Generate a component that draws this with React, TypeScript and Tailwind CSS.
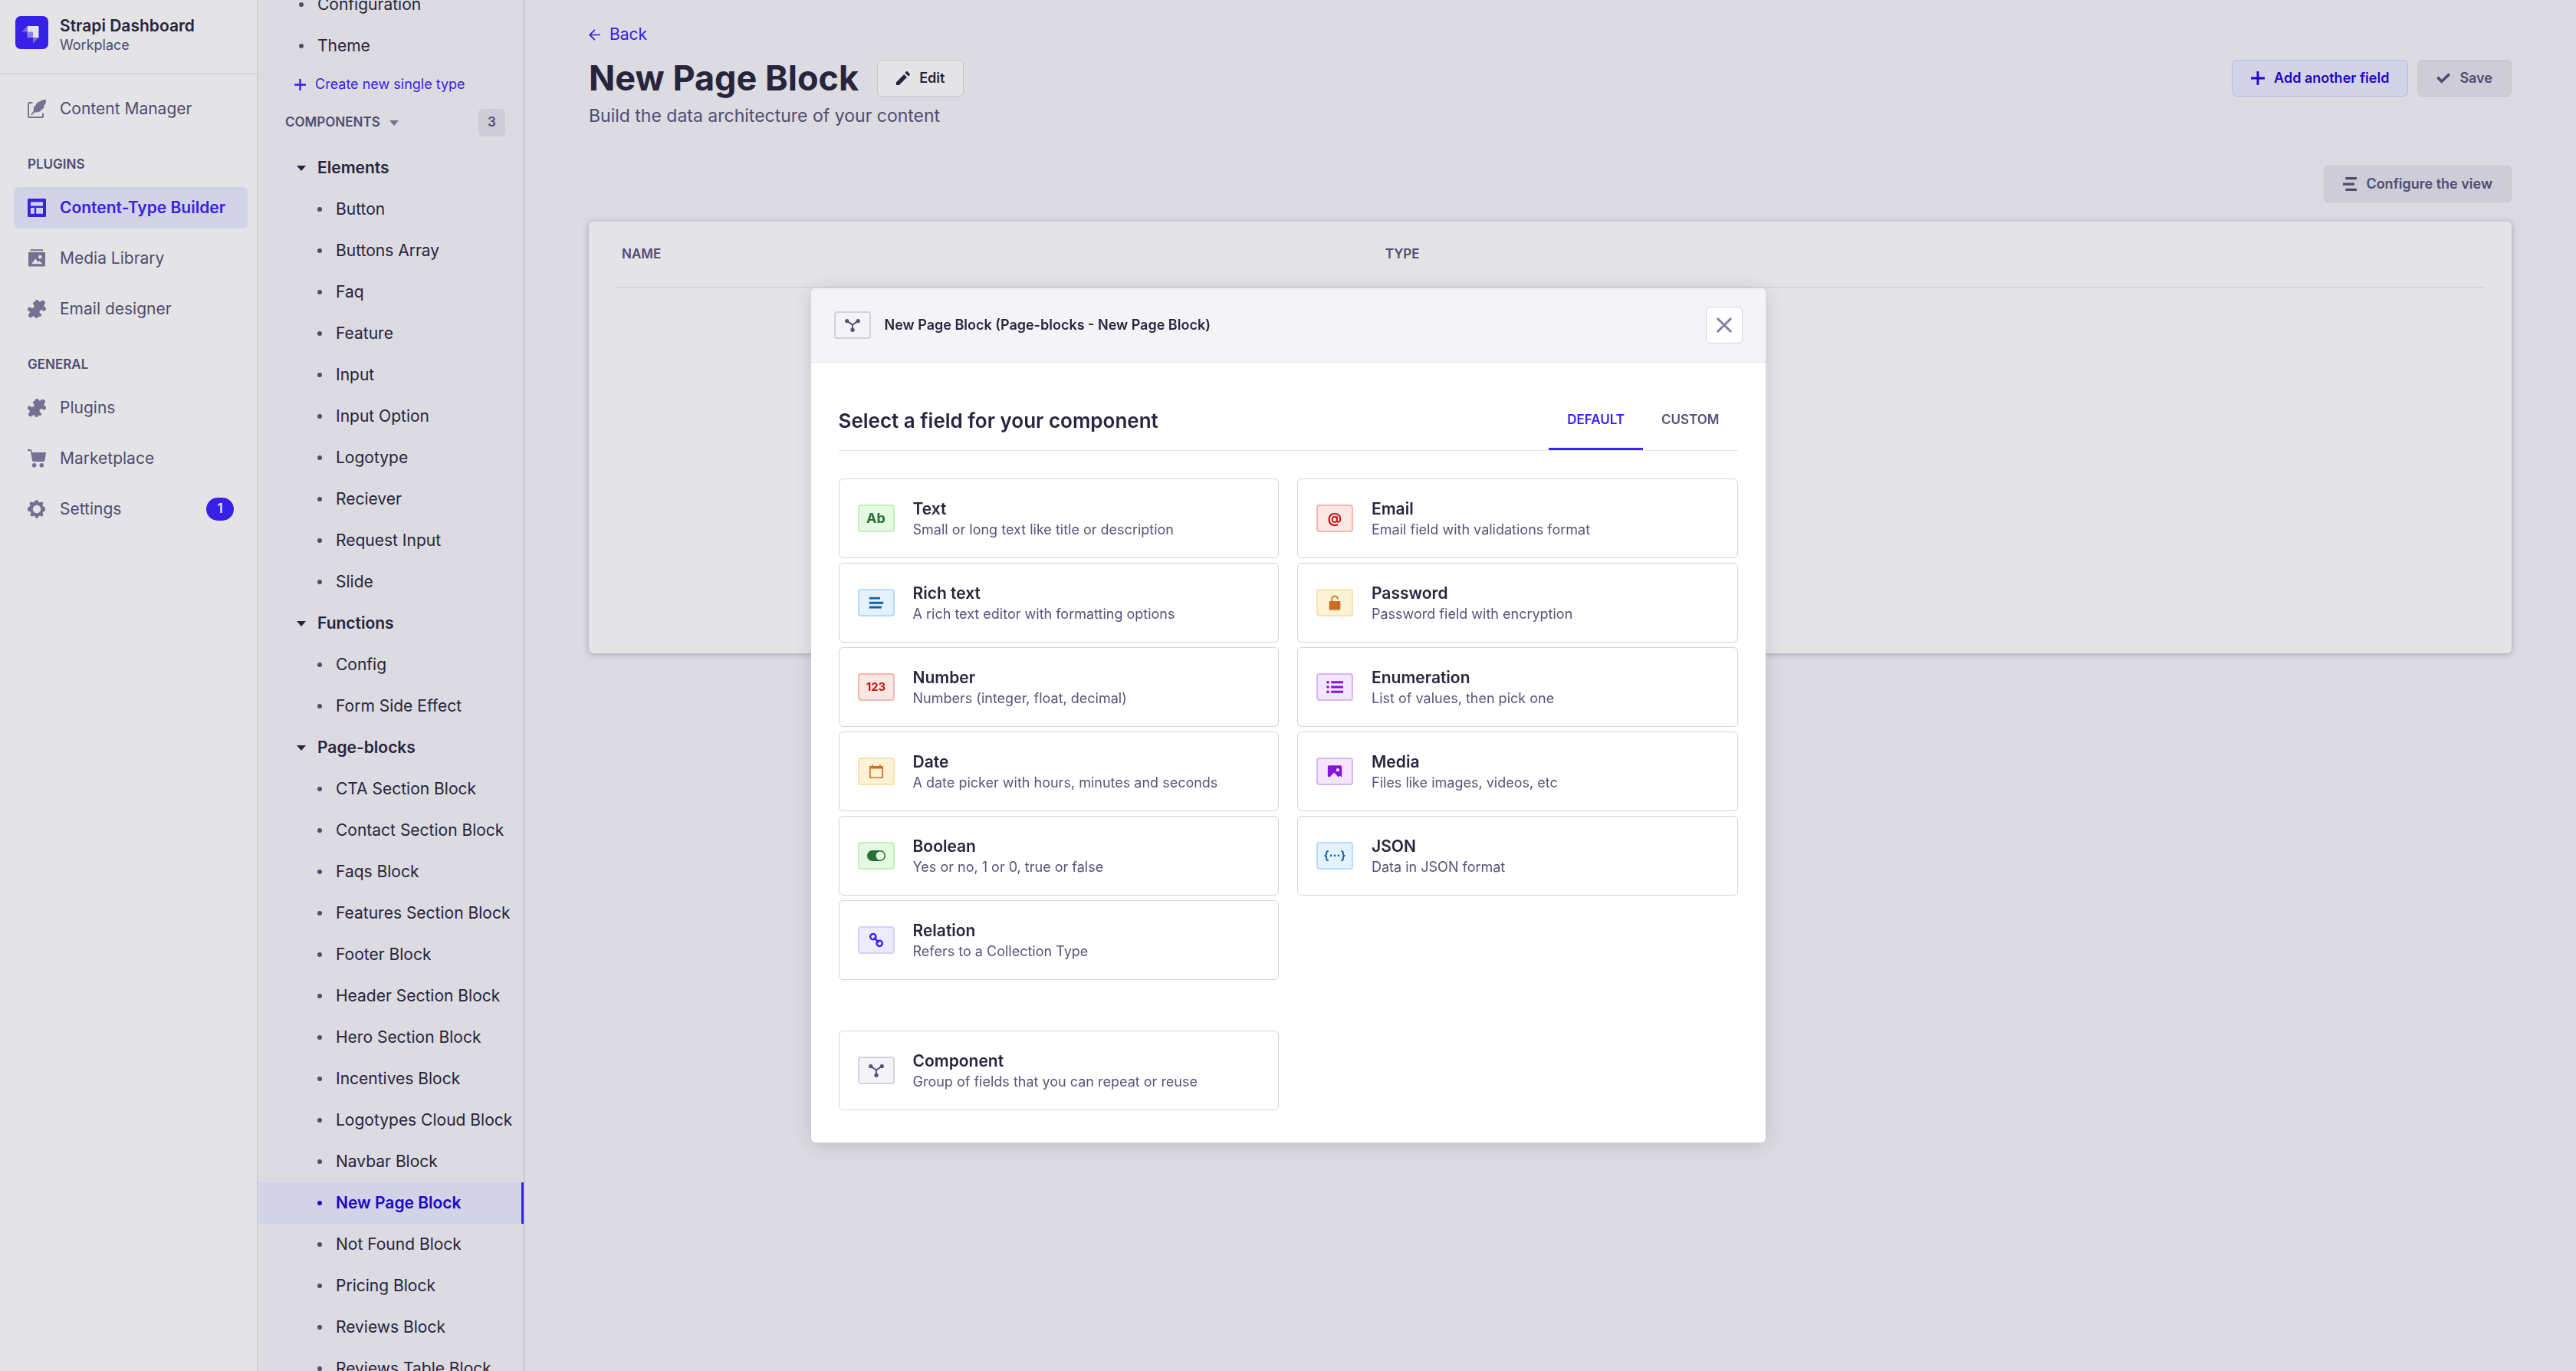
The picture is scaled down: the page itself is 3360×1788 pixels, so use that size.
import type { ReactNode } from "react";

type IconProps = { className?: string };

function Svg({ className, children, box = 24 }: IconProps & { children: ReactNode; box?: number }) {
  return (
    <svg viewBox={`0 0 ${box} ${box}`} className={className} fill="currentColor" aria-hidden="true">
      {children}
    </svg>
  );
}

const FeatherIcon = ({ className }: IconProps) => (
  <Svg className={className}>
    <path d="M6.500 4H2.600A1.600 1.600 0 0 0 1 5.600V21.400A1.600 1.600 0 0 0 2.600 23H18.400A1.600 1.600 0 0 0 20 21.400V17.500" fill="none" stroke="currentColor" strokeWidth="1.900" />
    <path d="M24 0c-2.400 0-4.700.4-6.700 1.300l-1.500 1.900-.3-1.200c-1.800 1-3.200 2.100-4.300 3.400l-.5 2.600-1-1C8.200 9.300 7.500 11.700 7.900 14.800L4.300 19l1.300 1.200 3.500-3.900c3.600.6 6.600-.2 8.900-2.200l-1.300-.9 3-.8c1-1.200 1.800-2.500 2.400-4l-1.500-.9 2.200-.9C23.700 4.700 24 2.500 24 0Z" />
  </Svg>
);

const LayoutIcon = ({ className }: IconProps) => (
  <Svg className={className}>
    <path fillRule="evenodd" d="M1.200 0h21.600c.7 0 1.200.5 1.200 1.200v21.600c0 .7-.5 1.200-1.200 1.200H1.200C.5 24 0 23.500 0 22.800V1.200C0 .5.5 0 1.200 0ZM4 4.600v4.900h16V4.600H4Zm0 7.500v7.600h4.800v-7.600H4Zm7.200 0v7.600H20v-7.600h-8.800Z" />
  </Svg>
);

const MediaLibraryIcon = ({ className }: IconProps) => (
  <Svg className={className}>
    <path d="M3.500.2h16.700v1.800H3.500z" />
    <path fillRule="evenodd" d="M2.300 3.800h19.400c.7 0 1.300.6 1.300 1.300v16.200c0 .7-.6 1.300-1.300 1.300H2.300c-.7 0-1.300-.6-1.300-1.300V5.100c0-.7.600-1.300 1.300-1.300Zm14 4a2.300 2.300 0 1 0 0 4.600 2.300 2.300 0 0 0 0-4.600ZM5 19.200h14.200l-3.500-4-2 1.800-3.400-4.500L5 19.200Z" />
  </Svg>
);

const PuzzleIcon = ({ className }: IconProps) => (
  <Svg className={className}>
    <path d="M9.400 1.900C9.900.7 11 0 12.200 0c1.300 0 2.200.8 2.700 1.900.4.800 1.500 1.100 2.200.3l.7-.7c1.200-1.100 3-.9 4.200.2 1.200 1.100 1.300 3 .2 4.200l-.8.900c-.6.8-.2 1.900.7 2.200 1.100.4 1.900 1.500 1.900 2.800 0 1.200-.7 2.400-1.900 2.800-.7.300-1.500 0-2.100-.6-.9-.9-2.200-1.100-3.200-.4-1.400.9-1.700 2.700-.7 4 .6.700 1.600.8 1.900 1.700.2.500.1 1.200-.2 1.700-.6 1-1.800 1.400-2.700.8-.3-.2-.6-.1-.8.3-.5 1.100-1.400 1.900-2.600 1.900-1.300 0-2.300-.8-2.700-2-.3-.8-1.400-1-2.100-.4l-.9.900c-1.100 1.100-3 1-4.100-.2-1.200-1.200-1.300-3-.2-4.100l.9-1c.6-.7.400-1.700-.5-2.100C.800 14.600 0 13.600 0 12.300c0-1.300.8-2.400 2-2.800.8-.3 1.500 0 2 .6 1 1 2.300 1.200 3.400.4 1.300-.9 1.500-2.700.5-3.900-.5-.6-1.100-1-1-1.900.1-1 1-1.700 1.900-1.700.4 0 .5-.5.600-1.100Z" />
  </Svg>
);

const CartIcon = ({ className }: IconProps) => (
  <Svg className={className}>
    <path d="M0 0h3.300c1 0 1.800.7 2 1.600L5.700 4H24l-1.500 10.200c-.1 1-.9 1.700-1.900 1.700H8c-1 0-1.800-.7-2-1.600L4 3 3.600 1.900H0V0Z" />
    <circle cx="8.600" cy="20.800" r="2.800" />
    <circle cx="18.300" cy="20.800" r="2.800" />
  </Svg>
);

const CogIcon = ({ className }: IconProps) => (
  <Svg className={className}>
    <path fillRule="evenodd" d="M10.200 1.200C10.600.4 11.200 0 12 0s1.400.4 1.800 1.200l.6 1.300c.4.8 1 1 1.800.700l1.400-.5c.9-.3 1.700-.2 2.200.3.600.600.700 1.300.4 2.200l-.5 1.400c-.3.800 0 1.500.7 1.800l1.400.6c.8.400 1.200 1 1.200 1.800v2.400c0 .8-.4 1.400-1.200 1.800l-1.400.6c-.7.300-1 1-.7 1.800l.5 1.400c.3.900.2 1.600-.4 2.200-.5.500-1.300.6-2.200.3l-1.400-.5c-.8-.3-1.400-.1-1.800.7l-.6 1.300c-.4.800-1 1.200-1.800 1.200s-1.400-.4-1.800-1.200l-.6-1.300c-.4-.8-1-1-1.800-.7l-1.400.5c-.9.300-1.700.2-2.200-.3-.6-.6-.7-1.300-.4-2.200l.5-1.400c.3-.8 0-1.500-.7-1.800l-1.400-.6C.400 14.600 0 14 0 13.200v-2.400C0 10 .4 9.400 1.200 9l1.400-.6c.7-.3 1-1 .7-1.800l-.5-1.400c-.3-.9-.2-1.600.4-2.200.5-.5 1.300-.6 2.200-.3l1.400.5c.8.3 1.400.1 1.800-.7l.6-1.300ZM12 6.800a5.200 5.200 0 1 0 0 10.400 5.200 5.200 0 0 0 0-10.400Z" />
  </Svg>
);

const PlusIcon = ({ className }: IconProps) => (
  <Svg className={className}>
    <path d="M10.100 0h3.800v10.100H24v3.800H13.900V24h-3.800V13.900H0v-3.800h10.100z" />
  </Svg>
);

const CheckIcon = ({ className }: IconProps) => (
  <Svg className={className}>
    <path d="M20.700 3.100 24 6.500 9 20.900.2 12.200l3.400-3.400L9 14.300z" />
  </Svg>
);

const PencilIcon = ({ className }: IconProps) => (
  <Svg className={className}>
    <path d="M0 19v5h5L18.600 10.400l-5-5L0 19ZM23.600 4.500 19.500.4a1.300 1.300 0 0 0-1.900 0l-2.300 2.300 6 6 2.300-2.300c.5-.5.500-1.400 0-1.900Z" />
  </Svg>
);

const ConfigureIcon = ({ className }: IconProps) => (
  <Svg className={className}>
    <path d="M4.500 0H24v4.300H4.500zM0 10h20v4.300H0zM4.500 19.700H24V24H4.500z" />
  </Svg>
);

const ArrowLeftIcon = ({ className }: IconProps) => (
  <Svg className={className}>
    <path d="M24 13.300H5.200l8.300 8.300-1.900 1.900L0 12 11.600.5l1.900 1.900-8.300 8.300H24z" />
  </Svg>
);

const CaretIcon = ({ className }: IconProps) => (
  <svg viewBox="0 0 12 7" className={className} fill="currentColor" aria-hidden="true">
    <path d="M0 0h12L6 7z" />
  </svg>
);

const CrossIcon = ({ className }: IconProps) => (
  <Svg className={className}>
    <path d="M2 2l20 20M22 2 2 22" fill="none" stroke="currentColor" strokeWidth="3.400" strokeLinecap="round" />
  </Svg>
);

const ComponentIcon = ({ className }: IconProps) => (
  <Svg className={className}>
    <circle cx="3.300" cy="5.500" r="3.200" />
    <circle cx="20.700" cy="5.500" r="3.200" />
    <circle cx="12" cy="19.500" r="3.200" />
    <path d="M3.300 5.500 12 11.500 20.700 5.500M12 11.500v8" fill="none" stroke="currentColor" strokeWidth="2.400" />
  </Svg>
);

const RichTextIcon = ({ className }: IconProps) => (
  <Svg className={className}>
    <path d="M2 4h15.500v3.200H2zM2 10.600h20v3.200H2zM2 17h17.500v3.200H2z" />
  </Svg>
);

const DateIcon = ({ className }: IconProps) => (
  <Svg className={className}>
    <path fillRule="evenodd" d="M4.500 0h2v2.600h11V0h2v2.600H23c.6 0 1 .4 1 1V23c0 .6-.4 1-1 1H1c-.6 0-1-.4-1-1V3.600c0-.6.400-1 1-1h3.500V0ZM2.200 7.200V22h19.600V7.200H2.200Z" />
  </Svg>
);

const ToggleIcon = ({ className }: IconProps) => (
  <svg viewBox="0 0 24 14" className={className} fill="currentColor" aria-hidden="true">
    <path fillRule="evenodd" d="M7 0h10a7 7 0 0 1 0 14H7A7 7 0 0 1 7 0Zm10 1.500a5.500 5.500 0 1 0 0 11 5.500 5.500 0 0 0 0-11Z" />
  </svg>
);

const RelationIcon = ({ className }: IconProps) => (
  <Svg className={className}>
    <g fill="none" stroke="currentColor" strokeWidth="2.900">
      <circle cx="7" cy="6.800" r="4.400" />
      <circle cx="17" cy="17.200" r="4.400" />
      <path d="M8.500 8 15.500 16" />
    </g>
  </Svg>
);

const LockIcon = ({ className }: IconProps) => (
  <Svg className={className}>
    <path d="M4.400 9.500h15.200c.7 0 1.200.5 1.200 1.200v11.600c0 .7-.5 1.200-1.200 1.200H4.400c-.7 0-1.200-.5-1.200-1.200V10.700c0-.7.500-1.200 1.200-1.200Z" />
    <path d="M7.300 10V6.500c0-3 2-4.900 4.700-4.900 2.300 0 4 1.300 4.500 3.300l.3 1.600" fill="none" stroke="currentColor" strokeWidth="2" />
  </Svg>
);

const EnumerationIcon = ({ className }: IconProps) => (
  <Svg className={className}>
    <path d="M6.800 3.600H24v3.200H6.800zM6.800 10.400H24v3.200H6.800zM6.800 17.200H24v3.200H6.800z" />
    <circle cx="2.200" cy="5.200" r="2" />
    <circle cx="2.200" cy="12" r="2" />
    <circle cx="2.200" cy="18.800" r="2" />
  </Svg>
);

const MediaIcon = ({ className }: IconProps) => (
  <Svg className={className}>
    <path fillRule="evenodd" d="M4 3.500h16c1.100 0 2 .9 2 2V20.500l-2.800-2.600-2.200 2.300-6-6.700L4.500 20.500 2 19V5.500c0-1.100.9-2 2-2Zm12.300 4a2.400 2.400 0 1 0 0 4.800 2.400 2.400 0 0 0 0-4.800Z" />
  </Svg>
);

const LogoMark = ({ className }: IconProps) => (
  <svg viewBox="0 0 43 43" className={className} aria-hidden="true">
    <rect width="43" height="43" rx="7" fill="#3b21ff" />
    <path d="M15.500 13h14c.7 0 1 .4 1 1v14.500H23V21h-7.500z" fill="#fff" />
    <path d="M15.500 20.500H23V28h-6.500c-.6 0-1-.4-1-1z" fill="#9a8cff" />
    <path d="M15.500 13v7.500H8.300zM23 35.500V28h7.500z" fill="#8273ff" />
  </svg>
);

type NavItem = { label: string; icon: (p: IconProps) => ReactNode; active?: boolean; badge?: string };

function NavLink({ label, icon: Icon, active, badge }: NavItem) {
  return (
    <li>
      <a
        href="#"
        aria-current={active ? "page" : undefined}
        className={`flex h-[54px] items-center gap-[18px] rounded-md px-[18px] ${
          active ? "bg-[#ebecff] font-semibold text-[#3b21ff]" : "text-[#56537a]"
        }`}
      >
        <Icon className={`size-6 shrink-0 ${active ? "text-[#3b21ff]" : "text-[#807d9f]"}`} />
        <span className="flex-1">{label}</span>
        {badge && (
          <span className="flex h-[30px] w-9 items-center justify-center rounded-full bg-[#3b21ff] text-[17px] font-semibold text-white">
            {badge}
          </span>
        )}
      </a>
    </li>
  );
}

const pluginItems: NavItem[] = [
  { label: "Content-Type Builder", icon: LayoutIcon, active: true },
  { label: "Media Library", icon: MediaLibraryIcon },
  { label: "Email designer", icon: PuzzleIcon },
];

const generalItems: NavItem[] = [
  { label: "Plugins", icon: PuzzleIcon },
  { label: "Marketplace", icon: CartIcon },
  { label: "Settings", icon: CogIcon, badge: "1" },
];

function NavGroup({ title, items }: { title: string; items: NavItem[] }) {
  return (
    <section className="flex flex-col gap-[18px]">
      <h2 className="px-[18px] text-[17px] leading-6 font-semibold text-[#56537a]">{title}</h2>
      <ul className="flex flex-col gap-3">
        {items.map((item) => (
          <NavLink key={item.label} {...item} />
        ))}
      </ul>
    </section>
  );
}

function MainNav() {
  return (
    <nav aria-label="Main" className="flex w-[336px] shrink-0 flex-col border-r border-[#dcdce4] bg-white">
      <div className="flex gap-[15px] border-b border-[#dcdce4] px-5 pt-[21px] pb-[25px]">
        <LogoMark className="size-[43px]" />
        <div>
          <p className="leading-[26px] font-semibold text-[#28253e]">Strapi Dashboard</p>
          <p className="text-lg leading-6 text-[#56537a]">Workplace</p>
        </div>
      </div>
      <div className="flex flex-col gap-[33px] pt-[18px] pr-3 pl-[18px]">
        <ul>
          <NavLink label="Content Manager" icon={FeatherIcon} />
        </ul>
        <NavGroup title="PLUGINS" items={pluginItems} />
        <NavGroup title="GENERAL" items={generalItems} />
      </div>
    </nav>
  );
}

const componentGroups = [
  {
    name: "Elements",
    items: ["Button", "Buttons Array", "Faq", "Feature", "Input", "Input Option", "Logotype", "Reciever", "Request Input", "Slide"],
  },
  { name: "Functions", items: ["Config", "Form Side Effect"] },
  {
    name: "Page-blocks",
    items: [
      "CTA Section Block",
      "Contact Section Block",
      "Faqs Block",
      "Features Section Block",
      "Footer Block",
      "Header Section Block",
      "Hero Section Block",
      "Incentives Block",
      "Logotypes Cloud Block",
      "Navbar Block",
      "New Page Block",
      "Not Found Block",
      "Pricing Block",
      "Reviews Block",
      "Reviews Table Block",
    ],
  },
];

function SubNavLink({ label, nested }: { label: string; nested?: boolean }) {
  const active = label === "New Page Block";
  return (
    <li>
      <a
        href="#"
        aria-current={active ? "page" : undefined}
        className={`flex h-[54px] items-center gap-[18px] whitespace-nowrap ${nested ? "pl-[78px]" : "pl-[54px]"} ${
          active ? "border-r-3 border-[#3b21ff] bg-[#ebecff] font-semibold text-[#1e00dc]" : "text-[#28253e]"
        }`}
      >
        <span className={`size-1.5 shrink-0 rounded-full ${active ? "bg-[#1e00dc]" : "bg-[#56537a]"}`} />
        {label}
      </a>
    </li>
  );
}

function SubNav() {
  return (
    <nav aria-label="Content types" className="w-[348px] shrink-0 overflow-hidden border-r border-[#cbcad6] bg-[#f6f5fa]">
      <ul className="-mt-[21px]">
        <SubNavLink label="Configuration" />
        <SubNavLink label="Theme" />
      </ul>
      <button type="button" className="mt-[11px] ml-12 flex h-6 items-center gap-3 text-lg leading-6 text-[#3b21ff]">
        <PlusIcon className="size-[15px]" />
        Create new single type
      </button>
      <div className="mt-5 flex items-center justify-between pr-6 pl-9">
        <button type="button" aria-expanded="true" className="flex items-center gap-3 text-[17px] font-semibold text-[#56537a]">
          COMPONENTS
          <CaretIcon className="h-[7px] w-3 text-[#807d9f]" />
        </button>
        <span className="flex h-9 w-[35px] items-center justify-center rounded-md bg-[#e5e4ee] text-[17px] font-semibold text-[#56537a]">
          3
        </span>
      </div>
      <div className="mt-[14px] flex flex-col">
        {componentGroups.map((group) => (
          <section key={group.name}>
            <button
              type="button"
              aria-expanded="true"
              className="flex h-[54px] items-center gap-[15px] pl-[51px] font-semibold text-[#28253e]"
            >
              <CaretIcon className="h-[7px] w-3" />
              {group.name}
            </button>
            <ul>
              {group.items.map((item) => (
                <SubNavLink key={item} label={item} nested />
              ))}
            </ul>
          </section>
        ))}
      </div>
    </nav>
  );
}

const buttonBase = "flex h-12 items-center gap-3 rounded-md border px-6 text-lg font-semibold";

function Content() {
  return (
    <main className="flex-1 bg-[#f6f5fa] px-[84px]">
      <a href="#" className="mt-[30px] flex h-[30px] w-fit items-center gap-3 text-[#3b21ff]">
        <ArrowLeftIcon className="size-[15px]" />
        Back
      </a>
      <header className="mt-[18px] flex items-center justify-between">
        <div className="flex items-center gap-6">
          <h1 className="text-[45px] leading-[48px] font-bold text-[#28253e]">New Page Block</h1>
          <button type="button" className={`${buttonBase} border-[#dcdce4] bg-white text-[#28253e]`}>
            <PencilIcon className="size-[18px]" />
            Edit
          </button>
        </div>
        <div className="flex gap-3">
          <button type="button" className={`${buttonBase} border-[#d3d0ff] bg-[#ebecff] text-[#1e00dc]`}>
            <PlusIcon className="size-[18px]" />
            Add another field
          </button>
          <button type="button" className={`${buttonBase} border-[#dcdbe5] bg-[#e5e4ee] text-[#56537a]`}>
            <CheckIcon className="size-[18px]" />
            Save
          </button>
        </div>
      </header>
      <p className="mt-[7px] text-[23px] leading-9 text-[#56537a]">Build the data architecture of your content</p>
      <div className="mt-[47px] flex justify-end">
        <button type="button" className={`${buttonBase} border-[#dcdbe5] bg-[#e5e4ee] text-[#56537a]`}>
          <ConfigureIcon className="size-[18px]" />
          Configure the view
        </button>
      </div>
      <div className="mt-[25px] h-[563px] rounded-md bg-white px-9 shadow-[0_1px_8px_rgba(33,33,80,0.3)]">
        <table className="w-full">
          <thead>
            <tr className="h-[85px] border-b border-[#e3e3ea] text-left text-[17px] text-[#56537a]">
              <th scope="col" className="w-[41%] pl-[7px] font-semibold">NAME</th>
              <th scope="col" className="pl-1 font-semibold">TYPE</th>
            </tr>
          </thead>
        </table>
      </div>
    </main>
  );
}

const tones = {
  green: "border-[#c0f0bb] bg-[#e4fbe1] text-[#2a6e37]",
  blue: "border-[#b3dcfd] bg-[#e4f2fe] text-[#1461a5]",
  red: "border-[#f3b8b4] bg-[#fae6e3] text-[#c61514]",
  orange: "border-[#f9e3ab] bg-[#fcf2d5] text-[#cf6c22]",
  purple: "border-[#dab6f0] bg-[#f3e6fb] text-[#8712e0]",
  indigo: "border-[#d3d0ff] bg-[#ebecff] text-[#3b21ff]",
  gray: "border-[#d3d2de] bg-[#f4f3f8] text-[#56537a]",
};

function Tile({ tone, children }: { tone: keyof typeof tones; children: ReactNode }) {
  return (
    <span className={`flex h-9 w-12 shrink-0 items-center justify-center rounded-sm border-2 font-bold ${tones[tone]}`}>
      {children}
    </span>
  );
}

type Field = { title: string; text: string; tone: keyof typeof tones; glyph: ReactNode };

const leftFields: Field[] = [
  { title: "Text", text: "Small or long text like title or description", tone: "green", glyph: <span className="text-lg">Ab</span> },
  { title: "Rich text", text: "A rich text editor with formatting options", tone: "blue", glyph: <RichTextIcon className="size-[22px]" /> },
  { title: "Number", text: "Numbers (integer, float, decimal)", tone: "red", glyph: <span className="text-[15px]">123</span> },
  { title: "Date", text: "A date picker with hours, minutes and seconds", tone: "orange", glyph: <DateIcon className="size-[18px]" /> },
  { title: "Boolean", text: "Yes or no, 1 or 0, true or false", tone: "green", glyph: <ToggleIcon className="h-3.5 w-6" /> },
  { title: "Relation", text: "Refers to a Collection Type", tone: "indigo", glyph: <RelationIcon className="size-5" /> },
];

const rightFields: Field[] = [
  { title: "Email", text: "Email field with validations format", tone: "red", glyph: <span className="text-lg leading-5">@</span> },
  { title: "Password", text: "Password field with encryption", tone: "orange", glyph: <LockIcon className="size-5" /> },
  { title: "Enumeration", text: "List of values, then pick one", tone: "purple", glyph: <EnumerationIcon className="size-[22px]" /> },
  { title: "Media", text: "Files like images, videos, etc", tone: "purple", glyph: <MediaIcon className="size-[22px]" /> },
  { title: "JSON", text: "Data in JSON format", tone: "blue", glyph: <span className="text-[15px]">{"{···}"}</span> },
];

function FieldCard({ title, text, tone, glyph }: Field) {
  return (
    <button type="button" className="flex h-[104px] w-full items-center gap-6 rounded-md border border-[#d3d2de] bg-white px-6 text-left">
      <Tile tone={tone}>{glyph}</Tile>
      <span className="flex flex-col">
        <span className="leading-[30px] font-semibold text-[#28253e]">{title}</span>
        <span className="text-lg leading-6 text-[#56537a]">{text}</span>
      </span>
    </button>
  );
}

function FieldModal() {
  return (
    <div className="fixed inset-0 flex items-start justify-center bg-[#212134]/12 pt-[376px]">
      <div
        role="dialog"
        aria-modal="true"
        aria-labelledby="dialog-title"
        className="w-full max-w-[1245px] overflow-hidden rounded-md bg-white shadow-[0_3px_24px_rgba(33,33,52,0.15)]"
      >
        <div className="flex items-center gap-[18px] border-b border-[#e3e3ea] bg-[#f4f3f8] px-[30px] py-6">
          <Tile tone="gray">
            <ComponentIcon className="size-5" />
          </Tile>
          <h2 id="dialog-title" className="flex-1 text-lg font-semibold text-[#28253e]">
            New Page Block (Page-blocks - New Page Block)
          </h2>
          <button
            type="button"
            aria-label="Close"
            className="flex size-12 items-center justify-center rounded-md border border-[#d3d2de] bg-white text-[#807d9f]"
          >
            <CrossIcon className="size-5" />
          </button>
        </div>
        <div className="px-9 pt-9 pb-[42px]">
          <div className="flex items-center justify-between border-b border-[#e3e3ea]">
            <h3 className="text-[26px] font-semibold text-[#28253e]">Select a field for your component</h3>
            <div role="tablist" className="flex text-[17px] font-semibold">
              <button
                type="button"
                role="tab"
                aria-selected="true"
                className="h-[78px] border-b-3 border-[#3b21ff] px-6 pt-0.5 text-[#3b21ff]"
              >
                DEFAULT
              </button>
              <button
                type="button"
                role="tab"
                aria-selected="false"
                className="h-[78px] border-b-3 border-transparent px-6 pt-0.5 text-[#56537a]"
              >
                CUSTOM
              </button>
            </div>
          </div>
          <div className="mt-9 grid grid-cols-2 gap-x-6">
            <div className="flex flex-col gap-1.5">
              {leftFields.map((field) => (
                <FieldCard key={field.title} {...field} />
              ))}
            </div>
            <div className="flex flex-col gap-1.5">
              {rightFields.map((field) => (
                <FieldCard key={field.title} {...field} />
              ))}
            </div>
          </div>
          <div className="mt-[66px] grid grid-cols-2 gap-x-6">
            <FieldCard
              title="Component"
              text="Group of fields that you can repeat or reuse"
              tone="gray"
              glyph={<ComponentIcon className="size-5" />}
            />
          </div>
        </div>
      </div>
    </div>
  );
}

export default function App() {
  return (
    <div className="flex h-screen overflow-hidden font-['Inter',sans-serif] text-[21px]">
      <MainNav />
      <SubNav />
      <Content />
      <FieldModal />
    </div>
  );
}
